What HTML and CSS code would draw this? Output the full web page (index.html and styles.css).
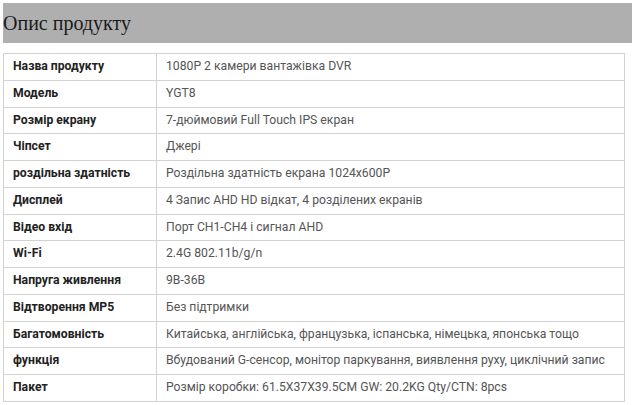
FILE: index.html
```html
<!DOCTYPE html>
<html lang="uk">
<head>
<meta charset="utf-8">
<link rel="stylesheet" href="styles.css">
</head>
<body>
<h2 class="title">Опис продукту</h2>
<table class="spec">
<tbody>
<tr><td class="k">Назва продукту</td><td class="v">1080P 2 камери вантажівка DVR</td></tr>
<tr><td class="k">Модель</td><td class="v">YGT8</td></tr>
<tr><td class="k">Розмір екрану</td><td class="v">7-дюймовий Full Touch IPS екран</td></tr>
<tr><td class="k">Чіпсет</td><td class="v">Джері</td></tr>
<tr><td class="k">роздільна здатність</td><td class="v">Роздільна здатність екрана 1024x600P</td></tr>
<tr><td class="k">Дисплей</td><td class="v">4 Запис AHD HD відкат, 4 розділених екранів</td></tr>
<tr><td class="k">Відео вхід</td><td class="v">Порт CH1-CH4 і сигнал AHD</td></tr>
<tr><td class="k">Wi-Fi</td><td class="v">2.4G 802.11b/g/n</td></tr>
<tr><td class="k">Напруга живлення</td><td class="v">9В-36В</td></tr>
<tr><td class="k">Відтворення MP5</td><td class="v">Без підтримки</td></tr>
<tr><td class="k">Багатомовність</td><td class="v">Китайська, англійська, французька, іспанська, німецька, японська тощо</td></tr>
<tr><td class="k">функція</td><td class="v">Вбудований G-сенсор, монітор паркування, виявлення руху, циклічний запис</td></tr>
<tr><td class="k">Пакет</td><td class="v">Розмір коробки: 61.5X37X39.5CM GW: 20.2KG Qty/CTN: 8pcs</td></tr>
</tbody>
</table>
</body>
</html>
```
FILE: styles.css
```css
html, body {
  margin: 0;
  padding: 0;
  background: #fff;
}
body {
  padding: 3px 4px 0 3px;
  overflow: hidden;
}
.title {
  margin: 0 -4px 10px 0;
  height: 40px;
  line-height: 40px;
  background: #afafaf;
  font-family: "Liberation Serif", serif;
  font-weight: normal;
  font-size: 20px;
  color: #1a1a1a;
}
.spec {
  width: 622px;
  border-collapse: collapse;
  font-family: Roboto, "Noto Sans", sans-serif;
  font-size: 12.2px;
  line-height: 15.75px;
}
.spec td {
  border: 1px solid #d2d2d2;
  padding: 5px 9px;
  vertical-align: middle;
  white-space: nowrap;
}
.k {
  width: 134px;
  font-weight: 700;
  color: #222;
}
.v {
  color: #555;
}
```
